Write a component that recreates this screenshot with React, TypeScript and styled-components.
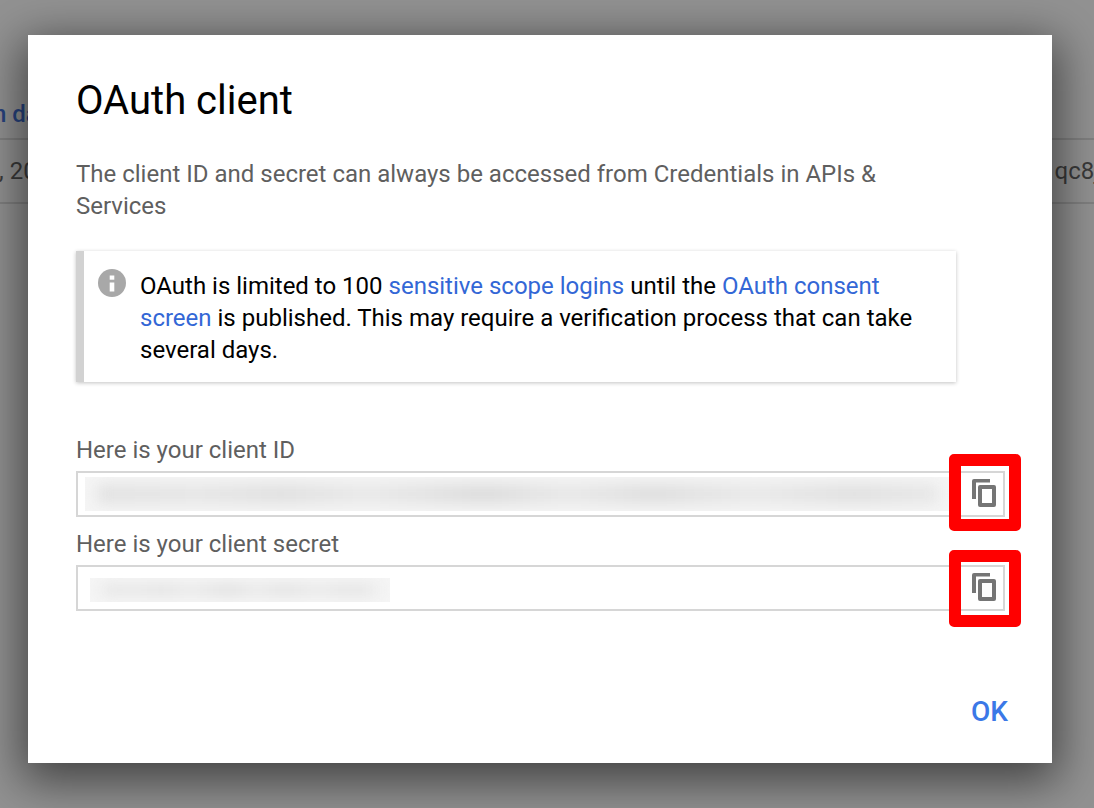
import React from "react";
import styled, { createGlobalStyle } from "styled-components";

const Global = createGlobalStyle`
  * { box-sizing: border-box; }
  html, body { margin: 0; padding: 0; height: 100%; }
  body { font-family: Roboto, "Liberation Sans", sans-serif; background: #929292; }
`;

const Page = styled.div`
  position: relative;
  width: 1094px;
  height: 808px;
  overflow: hidden;
  background: #929292;
  padding-top: 74px;
`;

const BackRow = styled.div<{ $h: number; $pad: number }>`
  display: flex;
  justify-content: space-between;
  align-items: center;
  height: ${(p) => p.$h}px;
  padding-top: ${(p) => p.$pad}px;
  margin-left: -13px;
  width: 1113px;
  border-bottom: 2px solid #808080;
  font-size: 24px;
  color: #3a3a3a;
  white-space: nowrap;
`;

const BackLink = styled.span`
  color: #27437f;
  font-weight: 500;
  margin-left: 6px;
`;

const BackCell = styled.span<{ $x?: number }>`
  margin-left: ${(p) => p.$x ?? 0}px;
`;

const Overlay = styled.div`
  position: absolute;
  inset: 0;
  padding: 35px 42px 45px 28px;
`;

const Dialog = styled.div`
  display: flex;
  flex-direction: column;
  height: 100%;
  background: #fff;
  padding: 42px 47px 35px 48px;
  box-shadow: 0 12px 44px 6px rgba(0, 0, 0, 0.55);
`;

const Title = styled.h1`
  margin: 0 0 33px;
  font-size: 40px;
  line-height: 48px;
  font-weight: 400;
  color: #000;
`;

const Lead = styled.p`
  margin: 0 0 29px;
  font-size: 24px;
  line-height: 32px;
  color: #5f5f5f;
  width: 860px;
`;

const Notice = styled.div`
  display: flex;
  gap: 14px;
  width: 880px;
  height: 131px;
  padding: 19px 20px 0 14px;
  background: #fff;
  border-left: 8px solid #d2d2d2;
  box-shadow: 0 1px 4px rgba(0, 0, 0, 0.24);
  margin-bottom: 52px;
`;

const InfoIcon = styled.svg`
  flex: none;
  width: 28px;
  height: 28px;
  margin-top: -1px;
`;

const NoticeText = styled.div`
  font-size: 24px;
  line-height: 32px;
  color: #000;
`;

const Link = styled.a`
  color: #3367d6;
  text-decoration: none;
`;

const Label = styled.div`
  font-size: 24px;
  line-height: 32px;
  color: #5f5f5f;
  margin-bottom: 5px;
`;

const Field = styled.div`
  position: relative;
  display: flex;
  align-items: center;
  justify-content: space-between;
  height: 46px;
  margin-bottom: 11px;
  border: 2px solid #d6d6d6;
`;

const Redacted = styled.div<{ $w: number; $h: number; $x: number; $y: number }>`
  position: relative;
  overflow: hidden;
  flex: none;
  width: ${(p) => p.$w}px;
  height: ${(p) => p.$h}px;
  margin-left: ${(p) => p.$x}px;
  margin-top: ${(p) => p.$y}px;
  background: #f5f5f5;

  &::before {
    content: "";
    position: absolute;
    inset: 7px 12px;
    filter: blur(7px);
    background: linear-gradient(
      90deg,
      #e2e2e2 0%,
      #e6e6e6 12%,
      #e0e0e0 22%,
      #e9e9e9 32%,
      #dcdcdc 46%,
      #e8e8e8 56%,
      #dedede 66%,
      #e9e9e9 78%,
      #e0e0e0 90%,
      #e8e8e8 100%
    );
  }
`;

const CopyIcon = styled.svg`
  flex: none;
  width: 24px;
  height: 28px;
  margin-right: 7px;
  margin-bottom: 2px;
  fill: #757575;
`;

const Highlight = styled.div<{ $top: number }>`
  position: absolute;
  right: -18px;
  top: ${(p) => p.$top}px;
  width: 72px;
  height: 77px;
  border: 12px solid #ff0000;
  border-radius: 5px;
`;

const Footer = styled.div`
  display: flex;
  justify-content: flex-end;
  margin-top: auto;
`;

const OkButton = styled.button`
  border: 0;
  padding: 0;
  margin-right: -3px;
  background: none;
  font-family: inherit;
  font-size: 28px;
  line-height: 32px;
  font-weight: 500;
  color: #3b78e7;
`;

const Copy = () => (
  <CopyIcon viewBox="0 0 24 28">
    <path d="M2 0H18V3.5H4V20H0V2A2 2 0 0 1 2 0Z" />
    <path
      fillRule="evenodd"
      d="M8 6H22A2 2 0 0 1 24 8V26A2 2 0 0 1 22 28H8A2 2 0 0 1 6 26V8A2 2 0 0 1 8 6ZM10 10V24H20V10Z"
    />
  </CopyIcon>
);

export default function App() {
  return (
    <Page>
      <Global />
      <BackRow $h={66} $pad={16}>
        <BackLink>n date</BackLink>
      </BackRow>
      <BackRow $h={64} $pad={0}>
        <BackCell $x={12}>, 2019</BackCell>
        <BackCell>qc8j</BackCell>
      </BackRow>
      <Overlay>
        <Dialog>
          <Title>OAuth client</Title>
          <Lead>
            The client ID and secret can always be accessed from Credentials in APIs &amp; Services
          </Lead>
          <Notice>
            <InfoIcon viewBox="0 0 28 28">
              <circle cx="14" cy="14" r="14" fill="#a8a8a8" />
              <rect x="11.7" y="13.5" width="4.6" height="9" fill="#fff" />
              <rect x="11.7" y="6.5" width="4.6" height="4.2" fill="#fff" />
            </InfoIcon>
            <NoticeText>
              OAuth is limited to 100 <Link>sensitive scope logins</Link> until the{" "}
              <Link>OAuth consent screen</Link> is published. This may require a verification
              process that can take several days.
            </NoticeText>
          </Notice>
          <Label>Here is your client ID</Label>
          <Field>
            <Redacted $w={866} $h={34} $x={7} $y={0} />
            <Copy />
            <Highlight $top={-19} />
          </Field>
          <Label>Here is your client secret</Label>
          <Field>
            <Redacted $w={300} $h={24} $x={12} $y={4} />
            <Copy />
            <Highlight $top={-17} />
          </Field>
          <Footer>
            <OkButton>OK</OkButton>
          </Footer>
        </Dialog>
      </Overlay>
    </Page>
  );
}
